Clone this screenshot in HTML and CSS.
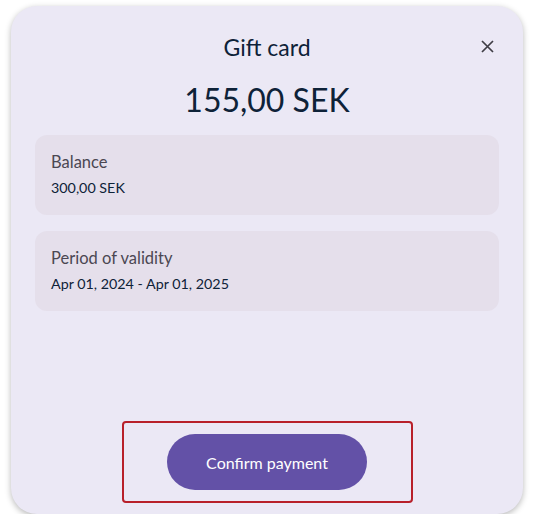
FILE: index.html
```html
<!DOCTYPE html>
<html lang="en">
<head>
  <meta charset="UTF-8">
  <title>Gift card</title>
  <link rel="stylesheet" href="styles.css">
</head>
<body>
  <div class="sheet">
    <div class="sheet-head">
      <h2>Gift card</h2>
      <button class="close" aria-label="Close">
        <svg width="13" height="13" viewBox="0 0 13 13"><path d="M1 1L12 12M12 1L1 12" stroke="#3f3d45" stroke-width="1.7" fill="none"/></svg>
      </button>
    </div>
    <div class="amount">155,00 SEK</div>

    <div class="info">
      <div class="label">Balance</div>
      <div class="value">300,00 SEK</div>
    </div>
    <div class="info">
      <div class="label">Period of validity</div>
      <div class="value">Apr 01, 2024 - Apr 01, 2025</div>
    </div>

    <div class="actions">
      <div class="highlight">
        <button class="confirm">Confirm payment</button>
      </div>
    </div>
  </div>
</body>
</html>
```

FILE: styles.css
```css
body {
  margin: 0;
  background: #fff;
  font-family: Lato, "Noto Sans", sans-serif;
  color: #0e2238;
}

.sheet {
  box-sizing: border-box;
  width: 512px;
  height: 508px;
  margin: 6px 0 0 11px;
  padding: 0 24px 11px;
  background: #ebe8f5;
  border-radius: 26px;
  box-shadow: 0 2px 6px rgba(0, 0, 0, 0.28);
  display: flex;
  flex-direction: column;
}

.sheet-head {
  position: relative;
  padding-top: 27px;
  text-align: center;
}

.sheet-head h2 {
  margin: 0;
  font-size: 23px;
  line-height: 28px;
  font-weight: 400;
}

.close {
  position: absolute;
  right: 5px;
  top: 34px;
  border: none;
  background: none;
  padding: 0;
  width: 13px;
  height: 13px;
  cursor: pointer;
}

.close svg {
  display: block;
}

.amount {
  margin: 20px 0 16px;
  text-align: center;
  font-size: 32px;
  line-height: 38px;
}

.info {
  background: #e5dfeb;
  border-radius: 12px;
  height: 80px;
  box-sizing: border-box;
  padding: 17px 16px 0;
  margin-bottom: 16px;
}

.label {
  font-size: 16.5px;
  color: #4b4752;
  line-height: 20px;
}

.value {
  margin-top: 7px;
  font-size: 14.3px;
  line-height: 17px;
}

.actions {
  margin-top: auto;
  display: flex;
  justify-content: center;
}

.highlight {
  width: 291px;
  height: 82px;
  box-sizing: border-box;
  border: 2px solid #b8202a;
  border-radius: 4px;
  display: flex;
  align-items: center;
  justify-content: center;
}

.confirm {
  width: 200px;
  height: 56px;
  border: none;
  border-radius: 28px;
  background: #6351a7;
  color: #fff;
  font-family: Lato, "Noto Sans", sans-serif;
  font-size: 16px;
  cursor: pointer;
}
```
